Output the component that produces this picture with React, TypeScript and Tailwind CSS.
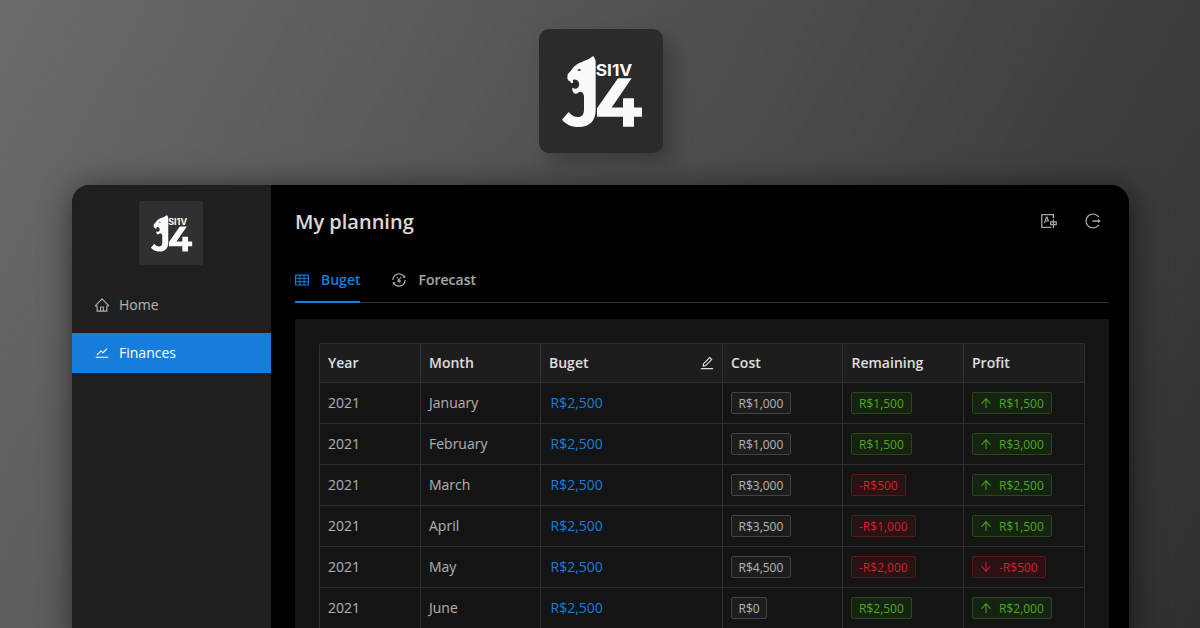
import type { ReactNode } from "react";
import {
  AiOutlineArrowDown,
  AiOutlineArrowUp,
  AiOutlineEdit,
  AiOutlineHome,
  AiOutlineLogout,
  AiOutlineStock,
  AiOutlineTable,
  AiOutlineTransaction,
  AiOutlineTranslation,
} from "react-icons/ai";

type Row = { month: string; cost: string; remaining: string; profit: string };

const rows: Row[] = [
  { month: "January", cost: "R$1,000", remaining: "R$1,500", profit: "R$1,500" },
  { month: "February", cost: "R$1,000", remaining: "R$1,500", profit: "R$3,000" },
  { month: "March", cost: "R$3,000", remaining: "-R$500", profit: "R$2,500" },
  { month: "April", cost: "R$3,500", remaining: "-R$1,000", profit: "R$1,500" },
  { month: "May", cost: "R$4,500", remaining: "-R$2,000", profit: "-R$500" },
  { month: "June", cost: "R$0", remaining: "R$2,500", profit: "R$2,000" },
];

const grid = "grid grid-cols-[101px_120px_182px_120px_121px_121px]";
const cell = "flex items-center border-r border-b border-[#303030] px-2";

function Logo({ className }: { className: string }) {
  return (
    <svg viewBox="27 27 372 372" className={className} fill="#fafafa" aria-hidden="true">
      <path d="M190 108 L195 117 L197 124 L197 270 C197 303 178 321 145 321 C124 321 108 313 96 299 L116 276 C124 286 133 291 143 291 C156 291 162 283 162 269 L162 228 C161 219 156 215 150 215 C144 217 142 222 136 221 C130 220 126 212 127 203 C132 206 138 207 142 205 C148 200 149 192 146 186 C142 179 135 177 129 180 L129 188 L124 190 L120 184 L114 181 L112 174 L113 163 L117 158 C124 152 128 143 137 136 C148 127 163 124 175 118 Z" />
      <path d="M141 151 L147 147 L154 149 L149 153 Z" fill="#2b2b2b" />
      <path d="M264 175 H305 L245 262.5 H279 V235 H312 V262.5 H336 V290.5 H312 V320.5 H279 V290.5 H201 V265 Z" />
      <text
        x="197"
        y="168"
        textLength="110"
        lengthAdjust="spacingAndGlyphs"
        className="font-['Inter',sans-serif] text-[48px] font-bold"
      >
        SI1V
      </text>
    </svg>
  );
}

function Tag({ tone, children }: { tone: "plain" | "green" | "red"; children: ReactNode }) {
  const tones = {
    plain: "border-[#434343] bg-[#1d1d1d] px-[6.5px] text-white/65",
    green: "border-[#274916] bg-[#162312] px-[7px] text-[#49aa19]",
    red: "border-[#58181c] bg-[#2a1215] px-[7px] text-[#d32029]",
  };
  return (
    <span className={`flex h-[22px] items-center rounded-xs border pt-[2px] text-xs ${tones[tone]}`}>
      {children}
    </span>
  );
}

const toneOf = (value: string) => (value.startsWith("-") ? "red" : "green");

function BudgetTable() {
  return (
    <div className="w-[766px] rounded-t-xs border-t border-l border-[#303030] text-sm text-white/65">
      <div className={`${grid} h-[39px] bg-[#1d1d1d] font-semibold text-white/85`}>
        <div className={cell}>Year</div>
        <div className={cell}>Month</div>
        <div className={`${cell} justify-between`}>
          Buget
          <AiOutlineEdit className="mr-[-1px] size-4" />
        </div>
        <div className={cell}>Cost</div>
        <div className={`${cell} pl-[8.5px]`}>Remaining</div>
        <div className={cell}>Profit</div>
      </div>
      {rows.map((row) => (
        <div key={row.month} className={`${grid} h-[41px]`}>
          <div className={cell}>2021</div>
          <div className={cell}>{row.month}</div>
          <div className={`${cell} pl-[9.5px] text-[#177ddc]`}>R$2,500</div>
          <div className={cell}>
            <Tag tone="plain">{row.cost}</Tag>
          </div>
          <div className={cell}>
            <Tag tone={toneOf(row.remaining)}>{row.remaining}</Tag>
          </div>
          <div className={cell}>
            <Tag tone={toneOf(row.profit)}>
              {row.profit.startsWith("-") ? (
                <AiOutlineArrowDown className="mr-[6px] mb-[2px] ml-[-1px] size-[14px]" />
              ) : (
                <AiOutlineArrowUp className="mr-[6px] mb-[2px] ml-[-1px] size-[14px]" />
              )}
              {row.profit}
            </Tag>
          </div>
        </div>
      ))}
    </div>
  );
}

export default function App() {
  return (
    <div className="flex h-[628px] w-[1200px] flex-col items-center overflow-hidden bg-linear-[118deg,#6b6b6b,#303030] pt-[29px] font-['Open_Sans',sans-serif]">
      <div className="ml-[2px] size-[124px] shrink-0 rounded-[10px] bg-[#2b2b2b] shadow-[10px_10px_20px_rgba(0,0,0,0.25)]">
        <Logo className="size-full" />
      </div>

      <div className="mt-8 mr-[-1px] flex h-[460px] w-[1057px] shrink-0 overflow-hidden rounded-[18px] bg-black shadow-[2px_4px_32px_rgba(0,0,0,0.6)]">
        <aside className="flex w-[199px] shrink-0 flex-col bg-[#1f1f1f] pt-4">
          <div className="ml-[67px] size-16 rounded-xs bg-[#303030]">
            <Logo className="size-full" />
          </div>
          <nav className="mt-5 flex flex-col gap-2 text-sm">
            <a className="flex h-10 items-center gap-[9px] pl-[22px] text-white/65">
              <AiOutlineHome className="size-4" />
              Home
            </a>
            <a className="flex h-10 items-center gap-[9px] bg-[#177ddc] pl-[22px] text-white">
              <AiOutlineStock className="size-4" />
              Finances
            </a>
          </nav>
        </aside>

        <main className="flex w-[858px] flex-col pr-5 pl-6">
          <header className="flex h-[73px] shrink-0 items-center justify-between">
            <h1 className="text-xl font-semibold text-white/85">My planning</h1>
            <div className="mr-[7px] mb-[2px] flex gap-[26px] text-white/65">
              <AiOutlineTranslation className="size-[18px]" />
              <AiOutlineLogout className="size-[18px]" />
            </div>
          </header>

          <div className="flex h-[45px] shrink-0 gap-8 border-b border-[#303030] text-sm font-semibold">
            <div className="mb-[-1px] flex items-center border-b-2 border-[#177ddc] text-[#177ddc]">
              <AiOutlineTable className="mr-[11px] ml-[-1px] size-4" />
              Buget
            </div>
            <div className="flex items-center text-white/65">
              <AiOutlineTransaction className="mr-[11px] ml-[-1px] size-4" />
              Forecast
            </div>
          </div>

          <section className="mt-4 grow rounded-xs bg-[#141414] p-6">
            <BudgetTable />
          </section>
        </main>
      </div>
    </div>
  );
}
